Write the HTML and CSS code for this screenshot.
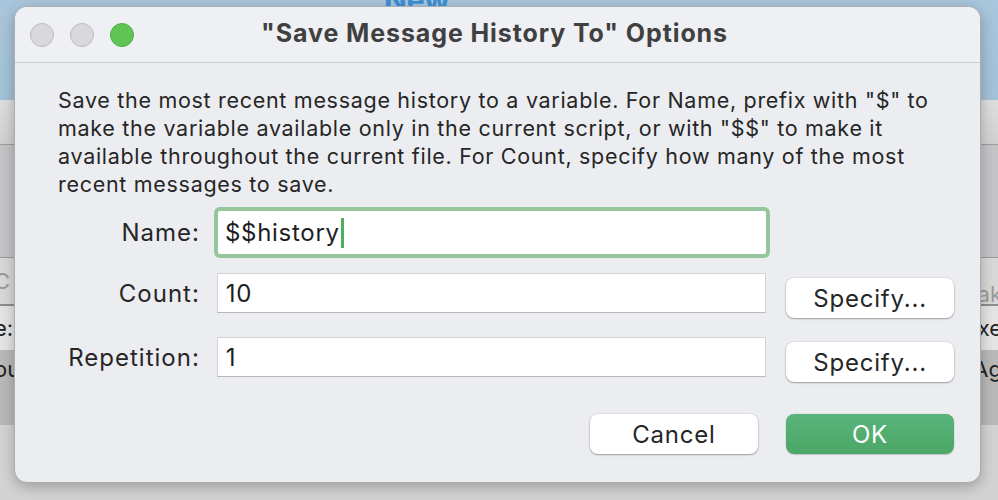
FILE: index.html
```html
<!DOCTYPE html>
<html>
<head>
  <meta charset="utf-8">
  <title>Options</title>
  <link rel="stylesheet" href="styles.css">
</head>
<body>
  <div class="backdrop">
    <div class="band sky"><span class="sky-title">New</span></div>
    <div class="band toolbar"></div>
    <div class="band pane"></div>
    <div class="band head"><span>C</span><span>ak</span></div>
    <div class="band row1"><span>e:</span><span>xe</span></div>
    <div class="band row2"><span>ou</span><span>Ag</span></div>
    <div class="band rest"></div>
  </div>

  <div class="dialog">
    <div class="titlebar">
      <div class="lights">
        <span class="light"></span>
        <span class="light"></span>
        <span class="light green"></span>
      </div>
      <h1>"Save Message History To" Options</h1>
    </div>

    <div class="content">
      <p class="desc">Save the most recent message history to a variable. For Name, prefix with "$" to make the variable available only in the current script, or with "$$" to make it available throughout the current file. For Count, specify how many of the most recent messages to save.</p>

      <div class="row row-name">
        <label class="lbl">Name:</label>
        <div class="field focus"><div class="input">$$history<span class="caret"></span></div></div>
      </div>

      <div class="row row-count">
        <label class="lbl">Count:</label>
        <div class="field"><div class="input">10</div></div>
        <button class="btn low">Specify...</button>
      </div>

      <div class="row row-rep">
        <label class="lbl">Repetition:</label>
        <div class="field"><div class="input">1</div></div>
        <button class="btn low">Specify...</button>
      </div>

      <div class="actions">
        <button class="btn">Cancel</button>
        <button class="btn ok">OK</button>
      </div>
    </div>
  </div>
</body>
</html>
```

FILE: styles.css
```css
* {
  margin: 0;
  padding: 0;
  box-sizing: border-box;
}
body {
  width: 998px;
  height: 500px;
  overflow: hidden;
  font-family: Inter, "Liberation Sans", sans-serif;
  color: #262626;
  position: relative;
}
.backdrop {
  display: flex;
  flex-direction: column;
  height: 500px;
}
.band {
  display: flex;
  justify-content: space-between;
  align-items: center;
  font-size: 22px;
  color: #222;
}
.band span:first-child {
  margin-left: -6px;
}
.band span:last-child {
  margin-right: -4px;
}
.sky {
  height: 100px;
  background: linear-gradient(#a9c6dc, #a3c1d7);
  justify-content: flex-start;
  align-items: flex-start;
}
.sky-title {
  margin: -18px 0 0 384px !important;
  font-size: 30px;
  font-weight: 700;
  color: #3d8fd6;
}
.toolbar {
  height: 45px;
  background: linear-gradient(#dedede, #d0d0d0);
  border-bottom: 1px solid #9d9d9d;
}
.pane {
  height: 113px;
  background: #c4c4c6;
  border-bottom: 1px solid #9c9c9c;
}
.head {
  height: 48px;
  background: #d8d8d8;
  color: #9a9a9a;
  border-bottom: 2px solid #8d8d8d;
}
.head span:last-child {
  border-bottom: 2px solid #4a9e5a;
  margin-bottom: -48px;
  padding-bottom: 20px;
}
.row1 {
  height: 44px;
  background: #e4e4e4;
}
.row2 {
  height: 75px;
  background: #b9b9b9;
  align-items: flex-start;
  padding-top: 6px;
}
.rest {
  flex: 1;
  background: #d3d3d3;
}

.dialog {
  position: absolute;
  left: 14px;
  top: 6px;
  width: 967px;
  height: 477px;
  background: #ecedf1;
  border-radius: 13px;
  border: 1px solid #abadb2;
  box-shadow: 0 4px 14px rgba(0, 0, 0, 0.25);
  overflow: hidden;
}
.titlebar {
  height: 56px;
  background: #eff0f4;
  border-bottom: 1px solid #c9cacd;
  display: flex;
  align-items: center;
  position: relative;
}
.lights {
  display: flex;
  gap: 16px;
  padding-left: 15px;
}
.light {
  width: 24px;
  height: 24px;
  border-radius: 50%;
  background: #d9d9dd;
  border: 1px solid #bcbcc0;
}
.light.green {
  background: #5fc454;
  border-color: #4fae47;
}
.titlebar h1 {
  position: absolute;
  left: 0;
  right: 0;
  top: 11px;
  text-align: center;
  font-size: 25px;
  line-height: 30px;
  font-weight: 700;
  color: #404040;
  letter-spacing: 0.9px;
  padding-right: 6px;
}
.content {
  padding: 23px 26px 0 43px;
}
.desc {
  font-size: 21.5px;
  line-height: 28px;
  letter-spacing: 0.7px;
  color: #262626;
  padding-right: 20px;
}
.row {
  display: flex;
  align-items: center;
}
.row-name {
  margin-top: 9px;
  height: 51px;
}
.row-count {
  margin-top: 15px;
  height: 40px;
}
.row-rep {
  margin-top: 24px;
  height: 40px;
}
.lbl {
  width: 142px;
  text-align: right;
  font-size: 24px;
  letter-spacing: 1px;
  color: #262626;
}
.field {
  width: 550px;
  height: 40px;
  margin-left: 17px;
}
.field.focus {
  width: 556px;
  height: 51px;
  margin-left: 14px;
  padding: 4px;
  border-radius: 6px;
  background: #94c59b;
}
.input {
  height: 100%;
  background: #fff;
  border: 1px solid #d4d4d6;
  border-bottom-color: #b8b8ba;
  font-size: 24px;
  letter-spacing: 0.7px;
  padding-left: 8px;
  display: flex;
  align-items: center;
  color: #1e1e1e;
}
.focus .input {
  border: none;
  border-radius: 2px;
  padding-left: 7px;
}
.caret {
  width: 3px;
  height: 30px;
  background: #4eae5f;
  margin-left: 1px;
}
.btn {
  height: 40px;
  width: 168px;
  border: none;
  border-radius: 8px;
  background: #fff;
  font-family: inherit;
  font-size: 24px;
  letter-spacing: 0.8px;
  color: #262626;
  box-shadow: 0 0 0 0.5px rgba(0, 0, 0, 0.12), 0 1px 2px rgba(0, 0, 0, 0.3);
}
.btn.low {
  align-self: flex-start;
  margin: 5px 0 0 20px;
}
.actions {
  display: flex;
  justify-content: flex-end;
  gap: 28px;
  margin-top: 37px;
}
.btn.ok {
  background: linear-gradient(#58b47a, #4ba766);
  color: #fff;
  box-shadow: 0 0 0 0.5px rgba(0, 0, 0, 0.08), 0 1px 1px rgba(0, 0, 0, 0.15);
}
```
